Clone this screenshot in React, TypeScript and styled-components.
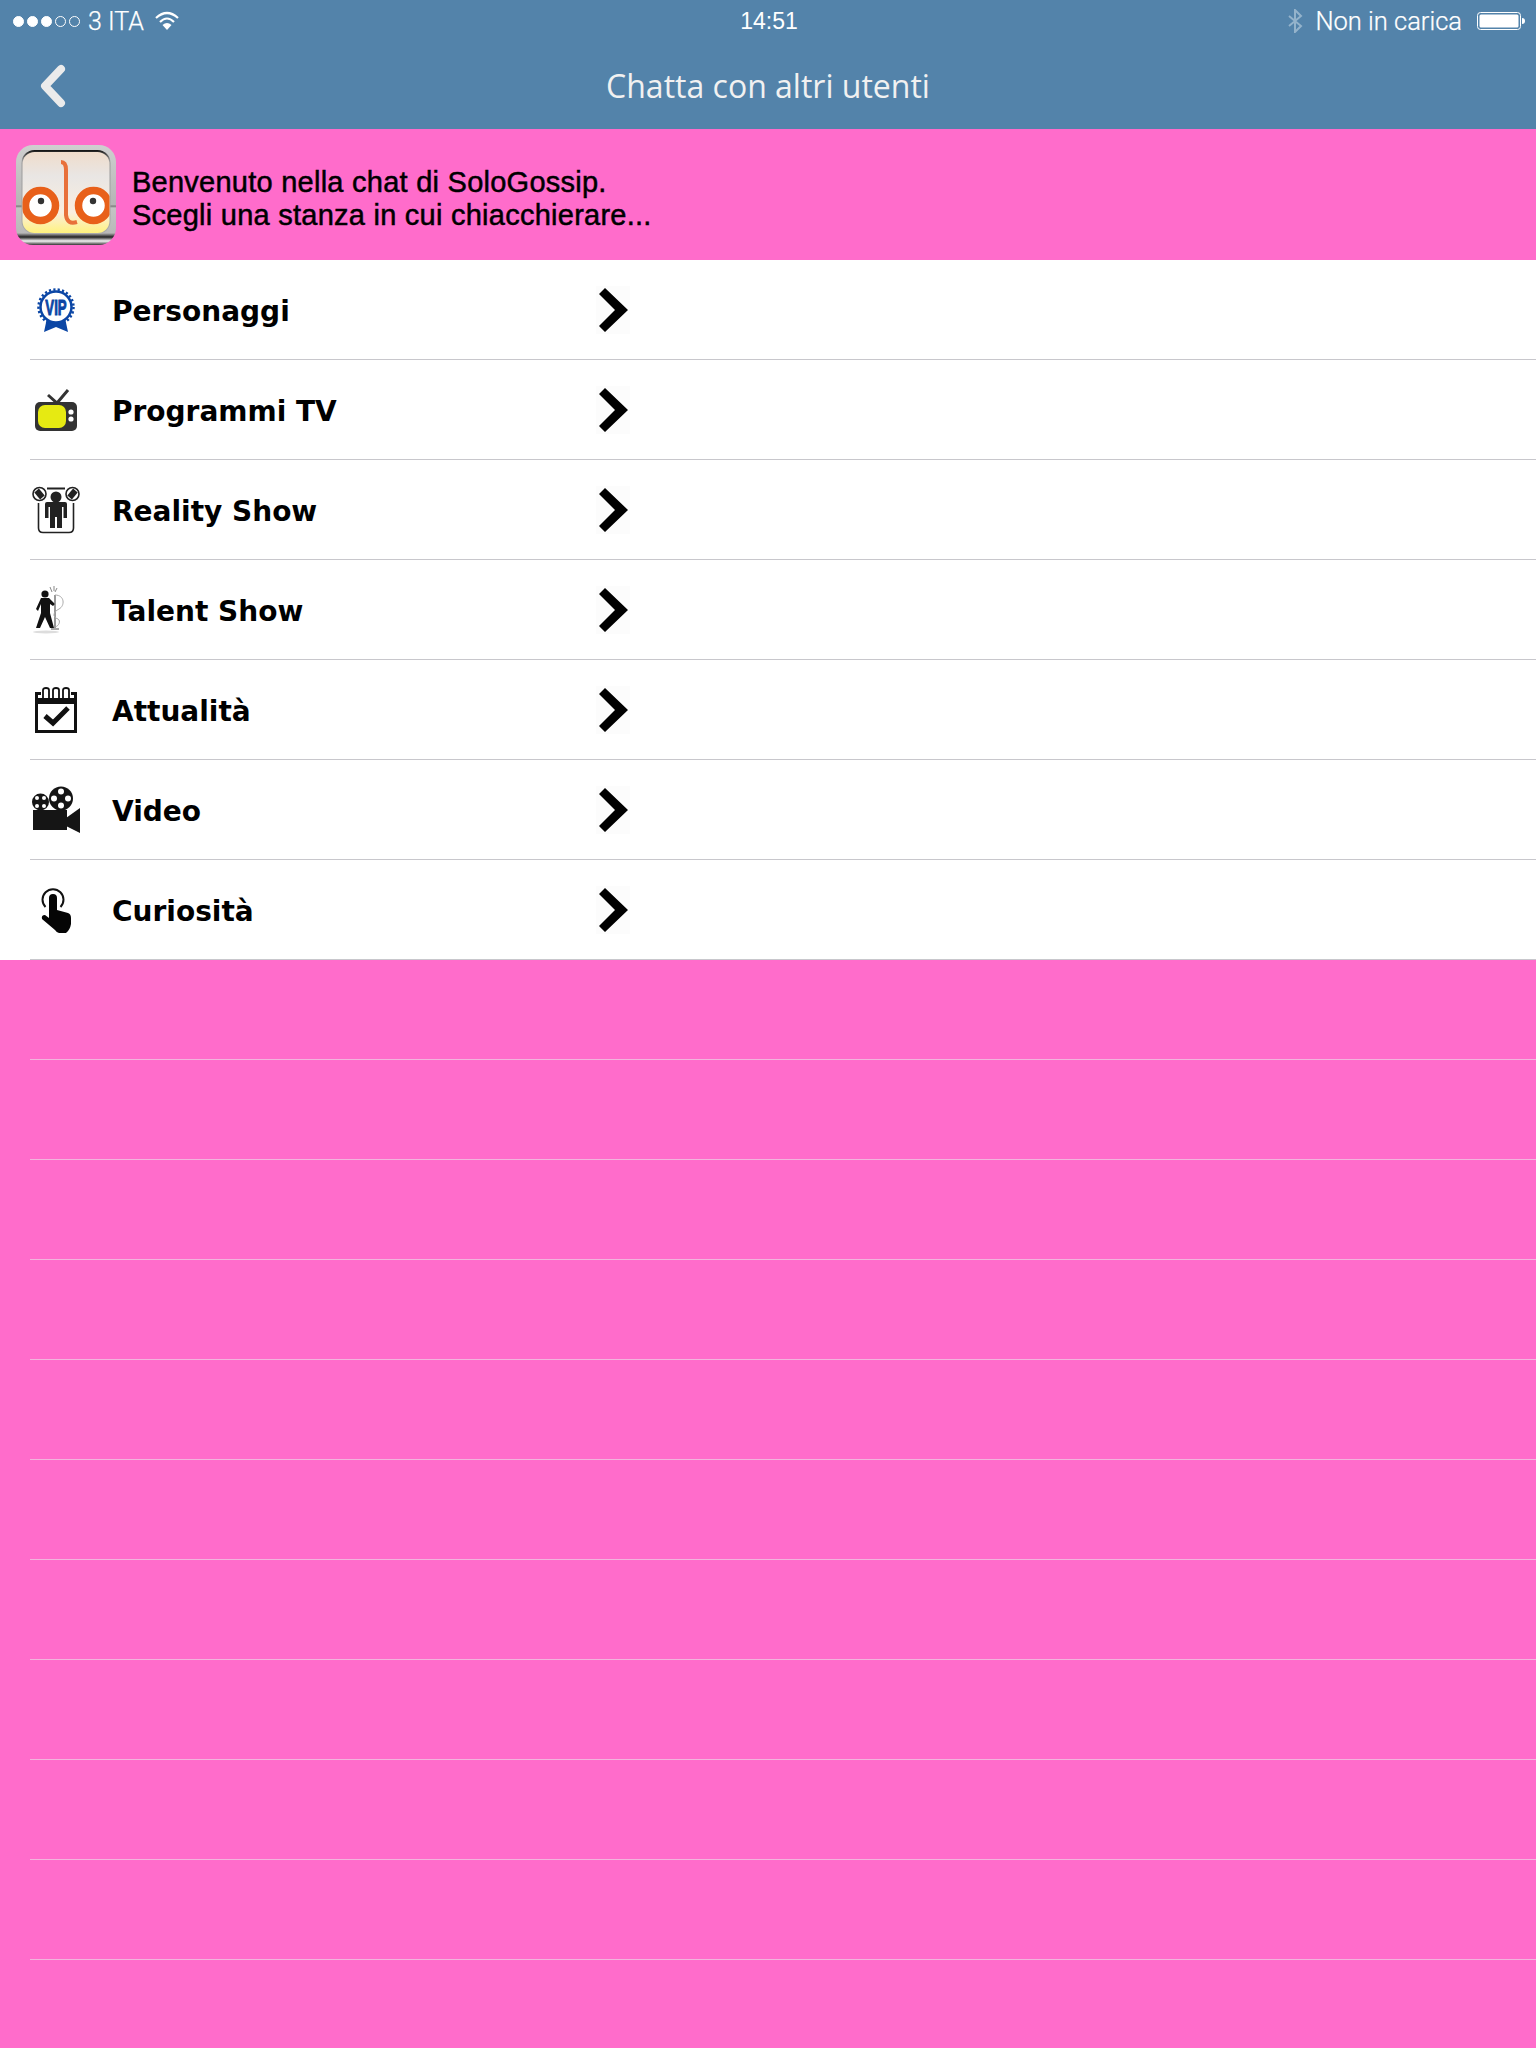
import * as React from "react";
import styled, { createGlobalStyle } from "styled-components";

const PINK = "#ff6ccb";
const BLUE = "#5383aa";

const GlobalStyle = createGlobalStyle`
  html, body {
    margin: 0;
    padding: 0;
    background: ${PINK};
  }
  * {
    box-sizing: border-box;
  }
`;

const Page = styled.div`
  width: 1536px;
  height: 2048px;
  overflow: hidden;
  background: ${PINK};
`;

const TopBar = styled.header`
  height: 129px;
  background: ${BLUE};
  color: #fff;
`;

const StatusBar = styled.div`
  height: 42px;
  padding: 0 11px 0 13px;
  display: grid;
  grid-template-columns: 1fr auto 1fr;
  align-items: center;
  font-family: "Liberation Sans", Arial, sans-serif;
  font-size: 24px;
`;

const StatusLeft = styled.div`
  display: flex;
  align-items: center;
`;

const StatusRight = styled.div`
  display: flex;
  align-items: center;
  justify-content: flex-end;
`;

const Signal = styled.div`
  display: flex;
  gap: 3px;
  margin-right: 8px;
`;

const Dot = styled.span<{ $on: boolean }>`
  width: 11px;
  height: 11px;
  border-radius: 50%;
  border: 1px solid #fff;
  background: ${(p) => (p.$on ? "#fff" : "transparent")};
`;

const Carrier = styled.span`
  margin-right: 11px;
  font-family: Roboto, sans-serif;
  font-weight: 300;
  font-size: 25px;
  -webkit-text-stroke: 0.25px #fff;
`;

const Clock = styled.span`
  font-size: 23px;
  font-weight: 400;
`;

const Charge = styled.span`
  margin: 0 15px 0 12px;
  font-family: Roboto, sans-serif;
  font-weight: 300;
  font-size: 25.5px;
  -webkit-text-stroke: 0.25px #fff;
`;

const NavBar = styled.nav`
  height: 87px;
  display: grid;
  grid-template-columns: 1fr auto 1fr;
  align-items: center;
  padding: 0 38px;
`;

const NavTitle = styled.h1`
  margin: 0;
  font-family: "Open Sans", sans-serif;
  font-size: 32px;
  font-weight: 400;
  color: #f1f1f1;
`;

const Intro = styled.section`
  height: 131px;
  padding-left: 16px;
  display: flex;
  align-items: center;
  gap: 16px;
`;

const IntroText = styled.p`
  margin: 8px 0 0;
  font-family: "Liberation Sans", Arial, sans-serif;
  font-size: 29px;
  letter-spacing: 0.25px;
  line-height: 33px;
  color: #000;
  -webkit-text-stroke: 0.5px #000;
`;

const List = styled.ul`
  margin: 0;
  padding: 0;
  list-style: none;
`;

const Row = styled.li<{ $filled: boolean }>`
  height: 100px;
  padding-left: 30px;
  background: ${(p) => (p.$filled ? "#fff" : "transparent")};
`;

const RowInner = styled.div<{ $filled: boolean }>`
  height: 100px;
  display: flex;
  align-items: center;
  border-bottom: 1px solid ${(p) => (p.$filled ? "#c8c7cc" : "#f2b5dd")};
`;

const RowIcon = styled.svg`
  width: 48px;
  height: 48px;
  flex: none;
  margin: 0 32px 0 2px;
`;

const RowLabel = styled.span`
  width: 484px;
  flex: none;
  padding-top: 4px;
  font-family: "DejaVu Sans", Verdana, sans-serif;
  font-size: 28px;
  font-weight: 700;
  color: #000;
`;

const RowChevron = styled.svg`
  width: 34px;
  height: 48px;
  flex: none;
  background: #fcfcfc;
`;

const VipIcon = () => (
  <>
    <path d="M15 32 L12 46 L24 41 L36 46 L33 32 Z" fill="#0b46a5" />
    <circle cx="24" cy="21" r="15.5" fill="#fff" stroke="#0b46a5" strokeWidth="2.5" />
    <circle cx="24" cy="21" r="17.5" fill="none" stroke="#0b46a5" strokeWidth="2.5" strokeDasharray="2.2 2.2" />
    <text transform="translate(24 29) scale(0.6 1)" textAnchor="middle" fontFamily="Liberation Sans, sans-serif" fontWeight="700" fontSize="22" fill="#0b46a5" stroke="#0b46a5" strokeWidth="1">VIP</text>
  </>
);

const TvIcon = () => (
  <>
    <path d="M16 9 L25 17 L36 4" fill="none" stroke="#333" strokeWidth="3" />
    <rect x="3" y="16" width="42" height="29" rx="5" fill="#333" />
    <rect x="6" y="19" width="28" height="23" rx="7" fill="#e6ea12" />
    <circle cx="39" cy="26" r="2.6" fill="#fff" />
    <circle cx="39" cy="33" r="2.6" fill="#fff" />
  </>
);

const RealityIcon = () => (
  <>
    <circle cx="7.5" cy="8" r="6.5" fill="#fff" stroke="#222" strokeWidth="1.6" />
    <circle cx="40.5" cy="8" r="6.5" fill="#fff" stroke="#222" strokeWidth="1.6" />
    <rect x="4.5" y="3.5" width="6" height="9" transform="rotate(-40 7.5 8)" fill="#222" />
    <rect x="37.5" y="3.5" width="6" height="9" transform="rotate(40 40.5 8)" fill="#222" />
    <rect x="15" y="1.5" width="18" height="2" fill="#222" />
    <path d="M6.5 17 V42 Q6.5 46.5 11 46.5 H37 Q41.5 46.5 41.5 42 V17" fill="none" stroke="#222" strokeWidth="1.6" />
    <circle cx="24" cy="11" r="5.5" fill="#222" />
    <path d="M13 18 Q13 16 15 16 H33 Q35 16 35 18 V32 H31.5 V21 H30 V42 H25 V31 H23 V42 H18 V21 H16.5 V32 H13 Z" fill="#222" />
  </>
);

const TalentIcon = () => (
  <>
    <ellipse cx="14" cy="46" rx="13" ry="1.5" fill="#ddd" />
    <circle cx="13" cy="8" r="3.6" fill="#111" />
    <path d="M9 12 H17 L23 18 L21 20 L18 18 V27 L22 42 H18 L13 31 L8 42 H4 L9 27 V18 L6 25 L4 23 Z" fill="#111" />
    <path d="M23 9 V42 M19 43 H27" fill="none" stroke="#555" strokeWidth="1.2" />
    <path d="M23 9 C33 9 33 20 27 23 C21 26 20 31 26 33 C29 35 27 40 23 41" fill="none" stroke="#aaa" strokeWidth="1" />
    <path d="M18 1 L20 6 M22 0 L22 5 M25 2 L23 6" stroke="#888" strokeWidth="1" />
  </>
);

const CalendarIcon = () => (
  <>
    <path d="M11 12 V4 Q11 2 14 2 Q17 2 17 4 V12 M21 12 V4 Q21 2 24 2 Q27 2 27 4 V12 M31 12 V4 Q31 2 34 2 Q37 2 37 4 V12" fill="none" stroke="#111" strokeWidth="1.8" />
    <path d="M9 7.5 H4.5 V45.5 H43.5 V7.5 H39" fill="none" stroke="#111" strokeWidth="3" />
    <rect x="5" y="12" width="38" height="6" fill="#111" />
    <path d="M13 30 L21 37 L36 22" fill="none" stroke="#111" strokeWidth="5" />
  </>
);

const CameraIcon = () => (
  <>
    <circle cx="8.5" cy="16" r="8.5" fill="#151515" />
    <circle cx="29" cy="12.5" r="12" fill="#151515" />
    {[[5, 12], [12, 12], [5, 20], [12, 20]].map(([x, y]) => (
      <circle key={`${x}-${y}`} cx={x} cy={y} r="2" fill="#fff" />
    ))}
    {[[29, 5.5], [22, 12.5], [36, 12.5], [29, 19.5]].map(([x, y]) => (
      <circle key={`${x}-${y}`} cx={x} cy={y} r="3" fill="#fff" />
    ))}
    <rect x="1" y="24" width="34" height="20" fill="#151515" />
    <path d="M34 32 L48 22 V47 L34 40 Z" fill="#151515" />
  </>
);

const TouchIcon = () => (
  <>
    <path d="M13.5 21 A10.5 10.5 0 1 1 28.5 21" fill="none" stroke="#111" strokeWidth="2" />
    <path d="M17 12 Q17 8 21 8 Q25 8 25 12 V24 L36 27 Q39 28 39 32 V38 Q38 44 34 47 H27 Q25 47 23 44 L10 33 Q9 29 13 29 L17 32 Z" fill="#050505" />
  </>
);

const rooms: { label: string; icon: React.ReactNode }[] = [
  { label: "Personaggi", icon: <VipIcon /> },
  { label: "Programmi TV", icon: <TvIcon /> },
  { label: "Reality Show", icon: <RealityIcon /> },
  { label: "Talent Show", icon: <TalentIcon /> },
  { label: "Attualità", icon: <CalendarIcon /> },
  { label: "Video", icon: <CameraIcon /> },
  { label: "Curiosità", icon: <TouchIcon /> },
];

const emptyRows = Array.from({ length: 11 }, (_, i) => i);

const Logo = () => (
  <svg width="100" height="100" viewBox="0 0 100 100">
    <defs>
      <linearGradient id="chrome" x1="0" y1="0" x2="0" y2="1">
        <stop offset="0" stopColor="#cfcfcf" />
        <stop offset="0.6" stopColor="#b5b5b5" />
        <stop offset="0.61" stopColor="#777" />
        <stop offset="0.63" stopColor="#c4c4c4" />
        <stop offset="0.88" stopColor="#b8b8b8" />
        <stop offset="0.92" stopColor="#222" />
        <stop offset="0.96" stopColor="#f4f4f4" />
        <stop offset="1" stopColor="#333" />
      </linearGradient>
      <linearGradient id="rim" x1="0" y1="0" x2="0" y2="1">
        <stop offset="0" stopColor="#111" />
        <stop offset="0.12" stopColor="#999" />
        <stop offset="1" stopColor="#aaa" />
      </linearGradient>
      <linearGradient id="face" x1="0" y1="0" x2="0" y2="1">
        <stop offset="0" stopColor="#efdccb" />
        <stop offset="0.3" stopColor="#e9e6e4" />
        <stop offset="0.75" stopColor="#faeedf" />
        <stop offset="1" stopColor="#fff27e" />
      </linearGradient>
      <clipPath id="faceClip">
        <rect x="6.5" y="7" width="87" height="81" rx="12" />
      </clipPath>
    </defs>
    <rect width="100" height="100" rx="17" fill="url(#chrome)" />
    <rect x="5.5" y="5" width="89" height="84" rx="13" fill="url(#rim)" />
    <rect x="6.5" y="7" width="87" height="81" rx="12" fill="url(#face)" />
    <g clipPath="url(#faceClip)">
      <circle cx="24.5" cy="60.5" r="15" fill="#fff" stroke="#e8601a" strokeWidth="7.5" />
      <circle cx="77.5" cy="60.5" r="15" fill="#fff" stroke="#e8601a" strokeWidth="7.5" />
      <circle cx="25" cy="56" r="3.2" fill="#333" />
      <circle cx="77" cy="56" r="3.2" fill="#333" />
      <path d="M45 17 Q50 17 50 25 V70 Q51 80 61 77" fill="none" stroke="#e8703a" strokeWidth="4" />
    </g>
  </svg>
);

export default function App() {
  return (
    <Page>
      <GlobalStyle />
      <TopBar>
        <StatusBar>
          <StatusLeft>
            <Signal>
              {[true, true, true, false, false].map((on, i) => (
                <Dot key={i} $on={on} />
              ))}
            </Signal>
            <Carrier>3 ITA</Carrier>
            <svg width="24" height="20" viewBox="0 0 24 20">
              <path d="M1 7 Q12 -3 23 7" fill="none" stroke="#fff" strokeWidth="2.2" />
              <path d="M5 11 Q12 4 19 11" fill="none" stroke="#fff" strokeWidth="2.2" />
              <path d="M12 19 L7.5 14 Q12 10 16.5 14 Z" fill="#fff" />
            </svg>
          </StatusLeft>
          <Clock>14:51</Clock>
          <StatusRight>
            <svg width="16" height="24" viewBox="0 0 16 24">
              <path d="M2 7 L14 17 L8 23 V1 L14 7 L2 17" fill="none" stroke="#94b3cb" strokeWidth="2" />
            </svg>
            <Charge>Non in carica</Charge>
            <svg width="48" height="20" viewBox="0 0 48 20">
              <rect x="0.5" y="1.5" width="43" height="17" rx="3" fill="none" stroke="#fff" />
              <rect x="2.5" y="3.5" width="39" height="13" rx="1.5" fill="#fff" />
              <path d="M45 7 Q48 7 48 10 Q48 13 45 13 Z" fill="#fff" />
            </svg>
          </StatusRight>
        </StatusBar>
        <NavBar>
          <svg width="30" height="44" viewBox="0 0 30 44">
            <path d="M23 5 L7 22 L23 39" fill="none" stroke="#ebebeb" strokeWidth="8" strokeLinecap="round" strokeLinejoin="round" />
          </svg>
          <NavTitle>Chatta con altri utenti</NavTitle>
          <span />
        </NavBar>
      </TopBar>
      <Intro>
        <Logo />
        <IntroText>
          Benvenuto nella chat di SoloGossip.
          <br />
          Scegli una stanza in cui chiacchierare...
        </IntroText>
      </Intro>
      <List>
        {rooms.map((room) => (
          <Row key={room.label} $filled>
            <RowInner $filled>
              <RowIcon viewBox="0 0 48 48">{room.icon}</RowIcon>
              <RowLabel>{room.label}</RowLabel>
              <RowChevron viewBox="0 0 34 48">
                <path d="M3 8 L9 2 L32 24 L9 46 L3 40 L19 24 Z" fill="#000" />
              </RowChevron>
            </RowInner>
          </Row>
        ))}
        {emptyRows.map((n) => (
          <Row key={n} $filled={false}>
            <RowInner $filled={false} />
          </Row>
        ))}
      </List>
    </Page>
  );
}
